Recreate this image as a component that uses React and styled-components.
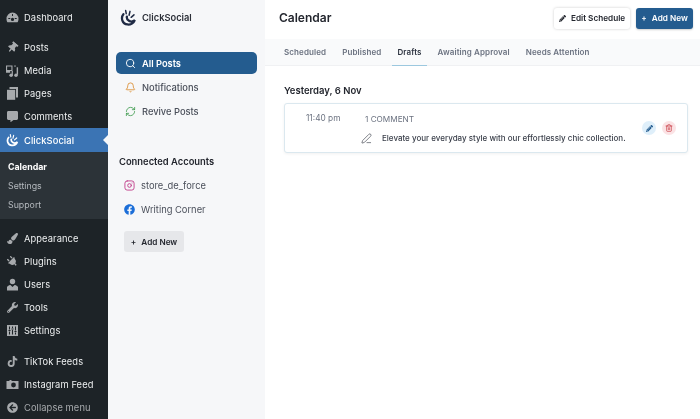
import React from 'react';
import styled, { createGlobalStyle } from 'styled-components';
import { FaThumbtack, FaCommentAlt, FaPaintBrush, FaPlug, FaWrench, FaTiktok, FaArrowCircleLeft, FaFacebook, FaPencilAlt } from 'react-icons/fa';
import { Search, Bell, RefreshCw, Instagram, Trash2, PenLine } from 'lucide-react';

const Global = createGlobalStyle`
  html, body { margin: 0; padding: 0; height: 419px; overflow: hidden; background: #fff; }
  body { font-family: Inter, "Liberation Sans", sans-serif; }
  #root { height: 419px; }
`;

const Page = styled.div`display: flex; width: 700px; height: 419px; overflow: hidden; filter: blur(.3px);`;

const WpMenu = styled.nav`
  width: 108px; flex: none; background: #1d2327; padding-top: 6px; box-sizing: border-box;
`;
const Gap = styled.div`height: ${p => p.$h}px;`;
const WpItem = styled.div`
  display: flex; align-items: center; height: ${p => p.$active ? 24 : 23}px; position: relative;
  padding-left: 6px; gap: 5px; font-size: 9.3px; letter-spacing: .1px;
  color: ${p => p.$active ? '#fff' : p.$dim ? '#a7aaad' : '#eef0f1'};
  background: ${p => p.$active ? '#3b74b4' : 'transparent'};
  font-weight: ${p => p.$active ? 500 : 400};
`;
const WpIcon = styled.span`
  width: 13px; height: 13px; flex: none; display: flex; align-items: center; justify-content: center;
  color: ${p => p.$active ? '#fff' : '#a7aaad'}; font-size: 11px;
`;
const Notch = styled.span`
  position: absolute; right: 0; top: 7px; width: 0; height: 0;
  border: 5px solid transparent; border-right-color: #f6f7f9; border-left: 0;
`;
const SubMenu = styled.div`background: #2c3338; padding: 5px 0;`;
const SubItem = styled.div`
  height: 19px; display: flex; align-items: center; padding-left: 8px; font-size: 8.8px;
  color: ${p => p.$active ? '#fff' : '#b4b9be'}; font-weight: ${p => p.$active ? 700 : 400};
`;

const Side = styled.aside`
  width: 157px; flex: none; background: #f6f7f9; box-sizing: border-box; display: flex; flex-direction: column;
`;
const Brand = styled.div`
  display: flex; align-items: center; gap: 5px; height: 35px; padding: 0 0 0 12px;
  font-size: 9.3px; font-weight: 600; color: #2b2f38;
`;
const NavList = styled.div`display: flex; flex-direction: column; padding: 17px 8px 0; gap: 2px;`;
const NavItem = styled.div`
  display: flex; align-items: center; gap: 6px; height: 22px; padding-left: 9px; border-radius: 5px;
  font-size: 9.3px; font-weight: ${p => p.$active ? 600 : 500};
  color: ${p => p.$active ? '#fff' : '#4a4f5a'};
  background: ${p => p.$active ? '#245c8f' : 'transparent'};
`;
const SideHeading = styled.div`
  margin: 33px 0 0 11px; font-size: 9.4px; font-weight: 600; color: #23262e; line-height: 14px;
`;
const Accounts = styled.div`display: flex; flex-direction: column; gap: 8px; margin: 8px 0 0 16px;`;
const Account = styled.div`
  display: flex; align-items: center; gap: 6px; height: 16px; font-size: 9.35px; color: #4a4f5a;
`;
const AddAccount = styled.button`
  margin: 14px 0 0 16px; width: 60px; height: 21px; border: 0; border-radius: 3px; background: #e6e7ea;
  font: 600 8.2px Inter, sans-serif; color: #23262e; padding: 0; display: flex; align-items: center; justify-content: center; gap: 5px;
`;

const Main = styled.main`flex: 1; min-width: 0; display: flex; flex-direction: column; background: #fff;`;
const Header = styled.header`
  height: 39px; display: flex; align-items: center; padding: 0 7px 0 14px; box-sizing: border-box; gap: 6px;
`;
const Title = styled.h1`margin: 0 auto 4px 0; font-size: 12px; font-weight: 600; color: #23262e;`;
const HeadButton = styled.button`
  height: 21px; margin-bottom: 3px; border: 0; border-radius: 3px; padding: 0; width: ${p => p.$w}px;
  display: flex; align-items: center; justify-content: center; gap: 3px;
  font: 600 8.2px Inter, sans-serif;
  color: ${p => p.$primary ? '#fff' : '#23262e'};
  background: ${p => p.$primary ? '#245c8f' : '#fff'};
  box-shadow: ${p => p.$primary ? '0 1px 2px rgba(0,0,0,.2)' : '0 0 3px rgba(0,0,0,.2)'};
`;
const Tabs = styled.div`
  height: 27px; background: #f9fafb; display: flex; padding-left: 14px; box-sizing: border-box;
  border-bottom: 1px solid #f0f1f3;
`;
const Tab = styled.div`
  padding: 0 5px; margin-right: 6px; height: 27px; box-sizing: border-box; display: flex; align-items: center;
  font-size: 8px; font-weight: 600; letter-spacing: .11px;
  color: ${p => p.$active ? '#2d3340' : '#6b7280'};
  border-bottom: 1px solid ${p => p.$active ? '#9cc8df' : 'transparent'};
`;
const Content = styled.section`padding: 18px 12px 0 19px;`;
const DayHeading = styled.h2`margin: 0; font-size: 9.5px; line-height: 14px; font-weight: 600; color: #23262e;`;
const Card = styled.article`
  margin-top: 5px; height: 50px; box-sizing: border-box; border: 1px solid #dbe8ef; border-radius: 3px;
  box-shadow: 0 1px 3px rgba(0,0,0,.06); display: flex; background: #fff;
`;
const Time = styled.div`width: 80px; padding: 8px 0 0 21px; box-sizing: border-box; font-size: 8.3px; line-height: 12px; color: #6b7280;`;
const Body = styled.div`flex: 1; min-width: 0; display: flex; flex-direction: column;`;
const Comment = styled.div`font-size: 8.2px; line-height: 12px; color: #6b7280; padding-top: 9px;`;
const Line = styled.div`
  display: flex; align-items: center; gap: 10px; margin: 6px 0 0 -4px; font-size: 8px; font-weight: 500; color: #3a3f4a; height: 14px; white-space: nowrap;
`;
const Actions = styled.div`display: flex; align-items: center; gap: 6px; padding: 0 11px 0 0; height: 48px;`;
const Round = styled.span`
  width: 14px; height: 14px; border-radius: 50%; background: ${p => p.$red ? '#fbe3e5' : '#dfeffa'};
  color: ${p => p.$red ? '#c7373f' : '#245c8f'}; display: flex; align-items: center; justify-content: center;
`;

const Logo = ({ color = '#1f2a44', size = 17 }) => (
  <svg width={size} height={size} viewBox="0 0 18 18" fill="none" stroke={color} strokeLinecap="round">
    <path d="M3.6 5.5C.8 9 1.9 15.8 8 16.4c3.3.3 6.6-1.6 7.7-4.6-1.5 1.3-4.3 1.9-6.2.7C7.9 11.5 7 9.4 7.3 8" strokeWidth="2.4" />
    <path d="M6.6 5 6 1.6M9.6 6.6l1-4.1M11.8 8.8l3-2.6" strokeWidth="1.6" />
  </svg>
);
const Media = () => (
  <svg width="14" height="14" viewBox="0 0 14 14" fill="currentColor">
    <path d="M0 1h7v6H4.5v2H0zM1.2 2.2v3.6h4.6V2.2z" fillRule="evenodd" />
    <rect x="9" y="1" width="1.4" height="1.4" /><rect x="11.5" y="3" width="1.5" height="8" />
    <circle cx="5.5" cy="11.6" r="1.9" /><circle cx="10.8" cy="11.6" r="1.9" /><rect x="6.1" y="7" width="1.3" height="5" />
  </svg>
);
const Pages = () => (
  <svg width="13" height="13" viewBox="0 0 13 13" fill="currentColor">
    <path d="M3.5 0H12v10.5H10V2H3.5z" /><rect x="1" y="2.8" width="8.2" height="10" />
  </svg>
);
const Dash = () => (
  <svg width="13" height="13" viewBox="0 0 13 13" fill="currentColor">
    <path fillRule="evenodd" d="M6.5 1.5A6.2 6.2 0 0 0 .5 8c0 1.3.4 2.5 1 3.3h10c.6-.8 1-2 1-3.3a6.2 6.2 0 0 0-6-6.5zM6 3h1v2H6zM2.3 7h2v1h-2zM8.7 7h2v1h-2zM6.5 6.8a1.6 1.6 0 1 1 0 3.2 1.6 1.6 0 0 1 0-3.2z" />
  </svg>
);
const UserIcon = () => (
  <svg width="13" height="13" viewBox="0 0 13 13" fill="currentColor">
    <circle cx="6.5" cy="3.5" r="2.7" /><path d="M1 12.5V9c1-1.6 2.8-2 3.4-2l2.1 2 2.1-2c.6 0 2.4.4 3.4 2v3.5z" />
  </svg>
);
const Sliders = () => (
  <svg width="13" height="13" viewBox="0 0 13 13">
    <rect x="1" y="1" width="11" height="11" fill="currentColor" />
    <path d="M3.5 2.5v3M3.5 7.5v3M6.5 2.5v1.5M6.5 6v4.5M9.5 2.5v4M9.5 8.5v2M2.5 6.5h2M5.5 5h2M8.5 7.5h2" stroke="#1d2327" strokeWidth="1" />
  </svg>
);
const Camera = () => (
  <svg width="13" height="13" viewBox="0 0 13 13" fill="currentColor">
    <path fillRule="evenodd" d="M.5 3h3V2h2v1H12.5v8H.5zM7.5 4.6a2.4 2.4 0 1 0 0 4.8 2.4 2.4 0 0 0 0-4.8z" />
  </svg>
);

const top = [
  { l: 'Posts', i: <FaThumbtack style={{ transform: 'rotate(40deg)' }} /> },
  { l: 'Media', i: <Media /> },
  { l: 'Pages', i: <Pages /> },
  { l: 'Comments', i: <FaCommentAlt /> },
];
const mid = [
  { l: 'Appearance', i: <FaPaintBrush /> },
  { l: 'Plugins', i: <FaPlug style={{ transform: 'rotate(-45deg)' }} /> },
  { l: 'Users', i: <UserIcon /> },
  { l: 'Tools', i: <FaWrench /> },
  { l: 'Settings', i: <Sliders /> },
];
const tabs = ['Scheduled', 'Published', 'Drafts', 'Awaiting Approval', 'Needs Attention'];

const Row = ({ l, i, ...p }) => <WpItem {...p}><WpIcon $active={p.$active}>{i}</WpIcon>{l}</WpItem>;

export default function App() {
  return (
    <Page>
      <Global />
      <WpMenu>
        <Row l="Dashboard" i={<Dash />} />
        <Gap $h={7} />
        {top.map(x => <Row key={x.l} {...x} />)}
        <WpItem $active><WpIcon $active><Logo color="#fff" size={14} /></WpIcon>ClickSocial<Notch /></WpItem>
        <SubMenu>
          <SubItem $active>Calendar</SubItem>
          <SubItem>Settings</SubItem>
          <SubItem>Support</SubItem>
        </SubMenu>
        <Gap $h={8} />
        {mid.map(x => <Row key={x.l} {...x} />)}
        <Gap $h={8} />
        <Row l="TikTok Feeds" i={<FaTiktok />} />
        <Row l="Instagram Feed" i={<Camera />} />
        <Row l="Collapse menu" $dim i={<FaArrowCircleLeft />} />
      </WpMenu>
      <Side>
        <Brand><Logo />ClickSocial</Brand>
        <NavList>
          <NavItem $active><Search size={11} strokeWidth={2} />All Posts</NavItem>
          <NavItem><Bell size={11} color="#d9892b" strokeWidth={1.8} />Notifications</NavItem>
          <NavItem><RefreshCw size={11} color="#3f9b4f" strokeWidth={1.8} />Revive Posts</NavItem>
        </NavList>
        <SideHeading>Connected Accounts</SideHeading>
        <Accounts>
          <Account><Instagram size={11} color="#c13f8b" strokeWidth={2} />store_de_force</Account>
          <Account><FaFacebook size={11} color="#1b6ed8" />Writing Corner</Account>
        </Accounts>
        <AddAccount><span>+</span>Add New</AddAccount>
      </Side>
      <Main>
        <Header>
          <Title>Calendar</Title>
          <HeadButton $w={76}><FaPencilAlt size={7} />&nbsp;Edit Schedule</HeadButton>
          <HeadButton $primary $w={57}><span>+</span>&nbsp;Add New</HeadButton>
        </Header>
        <Tabs>
          {tabs.map(t => <Tab key={t} $active={t === 'Drafts'}>{t}</Tab>)}
        </Tabs>
        <Content>
          <DayHeading>Yesterday, 6 Nov</DayHeading>
          <Card>
            <Time>11:40 pm</Time>
            <Body>
              <Comment>1 COMMENT</Comment>
              <Line><PenLine size={11} strokeWidth={1.4} />Elevate your everyday style with our effortlessly chic collection.</Line>
            </Body>
            <Actions>
              <Round><FaPencilAlt size={7} /></Round>
              <Round $red><Trash2 size={8} /></Round>
            </Actions>
          </Card>
        </Content>
      </Main>
    </Page>
  );
}
